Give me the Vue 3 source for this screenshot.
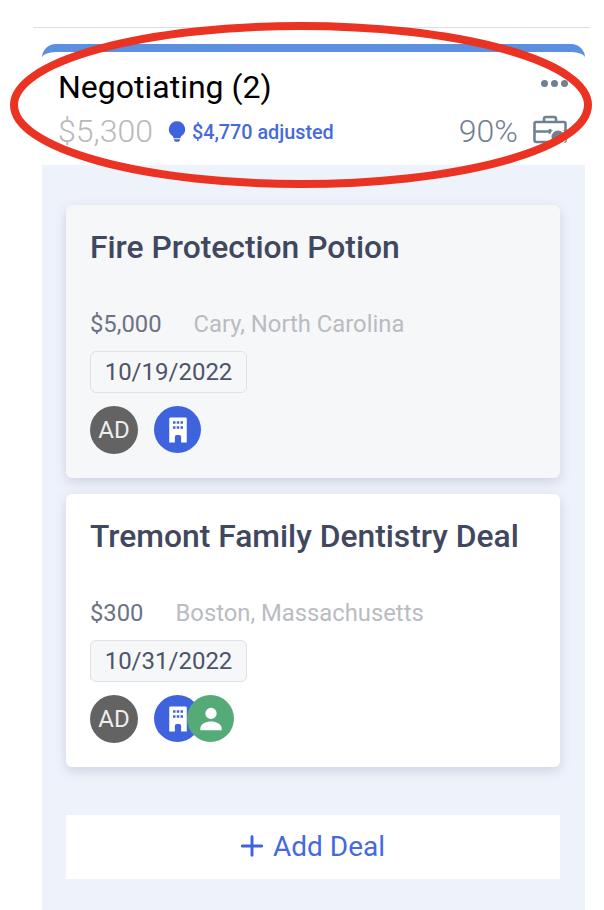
<template>
  <div class="page">
    <div class="top-line"></div>
    <div class="column">
      <div class="stage-head">
        <div class="head-row">
          <span class="stage-name">Negotiating (2)</span>
          <span class="more"><i></i><i></i><i></i></span>
        </div>
        <div class="head-row second">
          <div class="amounts">
            <span class="total">$5,300</span>
            <svg class="bulb" viewBox="0 0 20 24"><path d="M10 0.500a9 9 0 0 0-5.200 16.300c.9.7 1.200 1.500 1.200 2.700h8c0-1.200.3-2 1.200-2.700A9 9 0 0 0 10 .5zM6.500 20.500h7c0 1.800-1.500 3-3.500 3s-3.500-1.200-3.500-3z"/></svg>
            <span class="adjusted">$4,770 adjusted</span>
          </div>
          <div class="chance">
            <span>90%</span>
            <svg class="case" viewBox="0 0 34 30">
              <path d="M11 7V4a2 2 0 0 1 2-2h8a2 2 0 0 1 2 2v3M3 7h28a1.500 1.500 0 0 1 1.500 1.500V25a2 2 0 0 1-2 2H3.500a2 2 0 0 1-2-2V8.500A1.500 1.500 0 0 1 3 7zM1.500 16.500h31M17 14v5" fill="none" stroke="#6f8193" stroke-width="2.600"/>
              <circle cx="25" cy="22" r="7.500" fill="#6f8193" stroke="#fff" stroke-width="2"/>
            </svg>
          </div>
        </div>
      </div>

      <div class="stage-body">
        <div v-for="deal in deals" :key="deal.title" class="card" :class="{ grey: deal.grey }">
          <h3>{{ deal.title }}</h3>
          <div class="meta">
            <span class="price">{{ deal.price }}</span>
            <span class="place">{{ deal.place }}</span>
          </div>
          <div class="date">{{ deal.date }}</div>
          <div class="people">
            <span class="avatar">AD</span>
            <div class="links">
              <span class="round blue">
                <svg viewBox="0 0 24 24" width="30" height="30"><path fill="#fff" fill-rule="evenodd" d="M6 2h12a1 1 0 0 1 1 1v19h-4.500v-4.500a1.500 1.500 0 0 0-1.500-1.500h-2a1.500 1.500 0 0 0-1.500 1.500V22H5V3a1 1 0 0 1 1-1zM8 5v2h2V5zM11 5v2h2V5zM14 5v2h2V5zM8 9v2h2V9zM11 9v2h2V9zM14 9v2h2V9z"/></svg>
              </span>
              <span v-if="deal.contact" class="round green">
                <svg viewBox="0 0 24 24" width="30" height="30"><circle cx="12" cy="7.500" r="4.500" fill="#fff"/><path fill="#fff" d="M3.500 21v-1.500c0-3.500 4.500-5.500 8.500-5.500s8.500 2 8.500 5.500V21z"/></svg>
              </span>
            </div>
          </div>
        </div>

        <div class="add-deal">
          <svg viewBox="0 0 24 24" width="22" height="24"><path d="M12 2v20M1.500 12h21" stroke="#3f63dd" stroke-width="3.200" stroke-linecap="round"/></svg>
          <span>Add Deal</span>
        </div>
      </div>
    </div>

    <!-- red marker drawn over the screenshot -->
    <svg class="marker" viewBox="0 0 604 200" width="604" height="200">
      <ellipse cx="301" cy="105" rx="287" ry="79" fill="none" stroke="#ea3323" stroke-width="8"/>
    </svg>
  </div>
</template>

<script setup>
const deals = [
  { title: 'Fire Protection Potion', price: '$5,000', place: 'Cary, North Carolina', date: '10/19/2022', grey: true, contact: false },
  { title: 'Tremont Family Dentistry Deal', price: '$300', place: 'Boston, Massachusetts', date: '10/31/2022', grey: false, contact: true }
]
</script>

<style>
html, body {
  margin: 0;
  background: #fff;
}
</style>

<style scoped>
.page {
  position: relative;
  width: 604px;
  height: 910px;
  overflow: hidden;
  padding-top: 27px;
  box-sizing: border-box;
  font-family: Roboto, "Liberation Sans", sans-serif;
}
.top-line {
  height: 1px;
  margin: 0 14px 0 33px;
  background: #d8deea;
}
.column {
  margin: 16px 19px 0 42px;
}
.stage-head {
  border-top: 8px solid #5b8fdf;
  border-radius: 14px 14px 0 0;
  padding: 17px 17px 0 16px;
  height: 96px;
  box-sizing: content-box;
  background: #fff;
}
.head-row {
  display: flex;
  justify-content: space-between;
  align-items: center;
  height: 36px;
}
.head-row.second {
  margin-top: 8px;
}
.stage-name {
  font-size: 32px;
  color: #000;
}
.more {
  display: flex;
  gap: 3px;
  margin-top: -8px;
}
.more i {
  width: 7px;
  height: 7px;
  border-radius: 50%;
  background: #6f8193;
}
.amounts,
.chance {
  display: flex;
  align-items: center;
}
.total {
  font-size: 32px;
  font-weight: 300;
  color: #b9b9b9;
}
.bulb {
  width: 18px;
  height: 23px;
  margin-left: 15px;
  fill: #3f63dd;
}
.adjusted {
  margin: 2px 0 0 6px;
  font-size: 19.800px;
  font-weight: 500;
  color: #4569de;
}
.chance {
  gap: 15px;
  font-size: 32px;
  font-weight: 300;
  color: #6f8193;
}
.case {
  width: 34px;
  height: 30px;
  margin: -3px 1px 0 0;
}
.stage-body {
  height: 745px;
  padding: 40px 25px 0 24px;
  box-sizing: border-box;
  background: #eef2fb;
}
.card {
  height: 273px;
  margin-bottom: 16px;
  padding: 24px 24px 0;
  box-sizing: border-box;
  background: #fff;
  border-radius: 6px;
  box-shadow: 0 4px 12px rgba(60, 70, 110, 0.18);
}
.card.grey {
  background: #f6f7f9;
}
h3 {
  margin: 0;
  font-size: 31.800px;
  line-height: 36px;
  font-weight: 500;
  color: #40475e;
}
.meta {
  display: flex;
  gap: 32px;
  margin-top: 46px;
  font-size: 23.800px;
  line-height: 26px;
}
.price {
  color: #6c7284;
}
.place {
  color: #b9bcc2;
}
.date {
  width: 157px;
  height: 42px;
  margin-top: 14px;
  border: 1px solid #dfe1e6;
  border-radius: 6px;
  box-sizing: border-box;
  background: #f6f7f9;
  text-align: center;
  font-size: 24px;
  line-height: 40px;
  color: #4d5468;
}
.people {
  display: flex;
  gap: 16px;
  margin-top: 13px;
}
.avatar {
  width: 48px;
  height: 48px;
  border-radius: 50%;
  background: #636363;
  color: #eee;
  font-size: 24px;
  line-height: 48px;
  text-align: center;
}
.links {
  display: flex;
}
.round {
  display: flex;
  align-items: center;
  justify-content: center;
  width: 47px;
  height: 47px;
  border-radius: 50%;
}
.blue {
  background: #3f63dd;
}
.green {
  margin-left: -14px;
  background: #54ab78;
}
.add-deal {
  display: flex;
  align-items: center;
  justify-content: center;
  gap: 10px;
  height: 64px;
  margin-top: 48px;
  padding-bottom: 2px;
  box-sizing: border-box;
  background: #fff;
  color: #4569de;
  font-size: 28px;
}
.marker {
  position: absolute;
  left: 0;
  top: 0;
  pointer-events: none;
}
</style>
